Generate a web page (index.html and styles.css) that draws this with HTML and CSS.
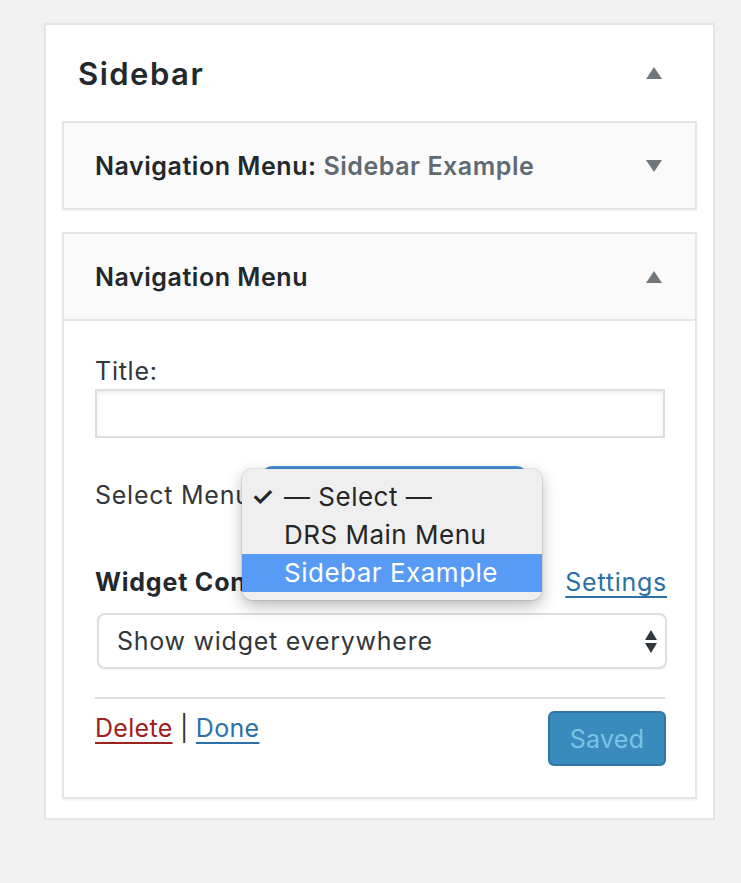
FILE: index.html
```html
<!DOCTYPE html>
<html>
<head>
<meta charset="utf-8">
<link rel="stylesheet" href="styles.css">
</head>
<body>
<div class="sidebar">
  <div class="sidebar-head">
    <h2 class="sidebar-title">Sidebar</h2>
    <span class="arrow up"></span>
  </div>
  <div class="widget">
    <div class="widget-head">
      <h3 class="widget-title">Navigation Menu: <span class="in-title">Sidebar Example</span></h3>
      <span class="arrow down"></span>
    </div>
  </div>
  <div class="widget open">
    <div class="widget-head bordered">
      <h3 class="widget-title">Navigation Menu</h3>
      <span class="arrow up"></span>
    </div>
    <div class="widget-inside">
      <label class="field-label">Title:</label>
      <div class="text-input"></div>
      <div class="menu-row">
        <span class="menu-label">Select Menu:</span>
        <span class="menu-select"></span>
        <div class="dropdown">
          <div class="opt checked"><span class="check">✓</span>— Select —</div>
          <div class="opt">DRS Main Menu</div>
          <div class="opt hl">Sidebar Example</div>
        </div>
      </div>
      <div class="context-row">
        <span class="context-title">Widget Context</span>
        <a class="link blue">Settings</a>
      </div>
      <div class="big-select">
        <span>Show widget everywhere</span>
        <span class="updown"><span class="tri-up"></span><span class="tri-down"></span></span>
      </div>
      <div class="widget-actions">
        <div class="links"><a class="link red">Delete</a> | <a class="link blue">Done</a></div>
        <div class="saved-btn">Saved</div>
      </div>
    </div>
  </div>
</div>
</body>
</html>
```

FILE: styles.css
```css
html, body {
  margin: 0;
  padding: 0;
  background: #f1f1f1;
  font-family: Inter, Roboto, "Liberation Sans", sans-serif;
  color: #32373c;
}
.sidebar {
  margin: 23px 0 0 44px;
  background: #fff;
  border: 2px solid #e5e5e5;
  box-shadow: 0 2px 2px rgba(0,0,0,0.04);
  padding: 0 16px;
  box-sizing: border-box;
  width: 671px;
  height: 797px;
}
.sidebar-head {
  height: 96px;
  display: flex;
  align-items: center;
  justify-content: space-between;
  padding: 0 35px 0 16px;
}
.sidebar-title {
  margin: 0;
  font-size: 31px;
  font-weight: 600;
  color: #23282d;
  letter-spacing: 1.5px;
}
.arrow {
  width: 0;
  height: 0;
  border-left: 8px solid transparent;
  border-right: 8px solid transparent;
}
.arrow.up { border-bottom: 12px solid #72777c; }
.arrow.down { border-top: 12px solid #72777c; }
.widget {
  border: 2px solid #e5e5e5;
  background: #fafafa;
  box-shadow: 0 2px 2px rgba(0,0,0,0.04);
  margin-bottom: 22px;
}
.widget.open { background: #fff; }
.widget-head {
  height: 85px;
  display: flex;
  align-items: center;
  justify-content: space-between;
  padding: 0 33px 0 31px;
  background: #fafafa;
}
.widget-head.bordered {
  border-bottom: 2px solid #e5e5e5;
  height: 85px;
}
.widget-title {
  margin: 0;
  font-size: 25px;
  font-weight: 600;
  letter-spacing: 0.55px;
  color: #23282d;
}
.in-title {
  color: #606a73;
  font-weight: 600;
}
.widget-inside {
  padding: 35px 30px 31px 31px;
  font-size: 25px;
  letter-spacing: 0.75px;
}
.field-label {
  display: block;
  height: 30px;
  line-height: 30px;
  color: #32373c;
}
.text-input {
  margin-top: 3px;
  height: 49px;
  border: 2px solid #ddd;
  box-sizing: border-box;
  box-shadow: inset 0 2px 4px rgba(0,0,0,0.07);
  background: #fff;
}
.menu-row {
  position: relative;
  display: flex;
  align-items: center;
  margin-top: 28px;
  height: 58px;
}
.menu-label {
  color: #32373c;
  white-space: nowrap;
}
.menu-select {
  position: absolute;
  left: 167px;
  top: 0;
  width: 265px;
  height: 50px;
  border: 3px solid #4a8fd8;
  border-radius: 10px;
  box-sizing: border-box;
}
.dropdown {
  position: absolute;
  left: 147px;
  top: 3px;
  width: 300px;
  height: 131px;
  background: #efefef;
  border-radius: 10px;
  box-shadow: 0 6px 16px rgba(0,0,0,0.28), 0 0 0 1px rgba(0,0,0,0.08);
  padding: 9px 0;
  box-sizing: border-box;
  letter-spacing: 0.5px;
}
.opt {
  position: relative;
  height: 38px;
  line-height: 38px;
  padding-left: 42px;
  font-size: 26px;
  color: #262626;
}
.opt .check {
  position: absolute;
  left: 9px;
  font-size: 26px;
  font-weight: 600;
}
.opt.hl {
  background: #589bf6;
  color: #fff;
}
.context-row {
  display: flex;
  align-items: center;
  justify-content: space-between;
  margin-top: 39px;
  height: 38px;
}
.context-title {
  font-weight: 700;
  font-size: 25px;
  letter-spacing: 0.8px;
  color: #23282d;
}
.link {
  text-decoration: underline;
  text-underline-offset: 5px;
  text-decoration-thickness: 2px;
  cursor: pointer;
}
.link.blue { color: #2c70a7; }
.link.red { color: #a0201c; }
.context-row .link { margin-right: -2px; }
.big-select {
  margin-top: 12px;
  margin-left: 2px;
  margin-right: -2px;
  height: 56px;
  border: 2px solid #ddd;
  border-radius: 8px;
  box-sizing: border-box;
  display: flex;
  align-items: center;
  justify-content: space-between;
  padding: 0 8px 0 18px;
  box-shadow: 0 1px 2px rgba(0,0,0,0.06);
  color: #32373c;
}
.updown {
  display: flex;
  flex-direction: column;
  gap: 3px;
}
.tri-up, .tri-down {
  width: 0; height: 0;
  border-left: 6px solid transparent;
  border-right: 6px solid transparent;
}
.tri-up { border-bottom: 10px solid #32373c; }
.tri-down { border-top: 10px solid #32373c; }
.widget-actions {
  margin-top: 28px;
  border-top: 2px solid #ddd;
  display: flex;
  justify-content: space-between;
  align-items: flex-start;
  padding-top: 12px;
}
.links {
  margin-top: -1px;
  color: #32373c;
  height: 36px;
  line-height: 36px;
  letter-spacing: 0.3px;
}
.saved-btn {
  width: 118px;
  height: 55px;
  box-sizing: border-box;
  background: #3a8bbd;
  border: 2px solid #2f75a5;
  border-radius: 6px;
  color: #79c3e6;
  font-size: 25px;
  letter-spacing: 0.3px;
  display: flex;
  align-items: center;
  justify-content: center;
  margin-right: -1px;
}
```
